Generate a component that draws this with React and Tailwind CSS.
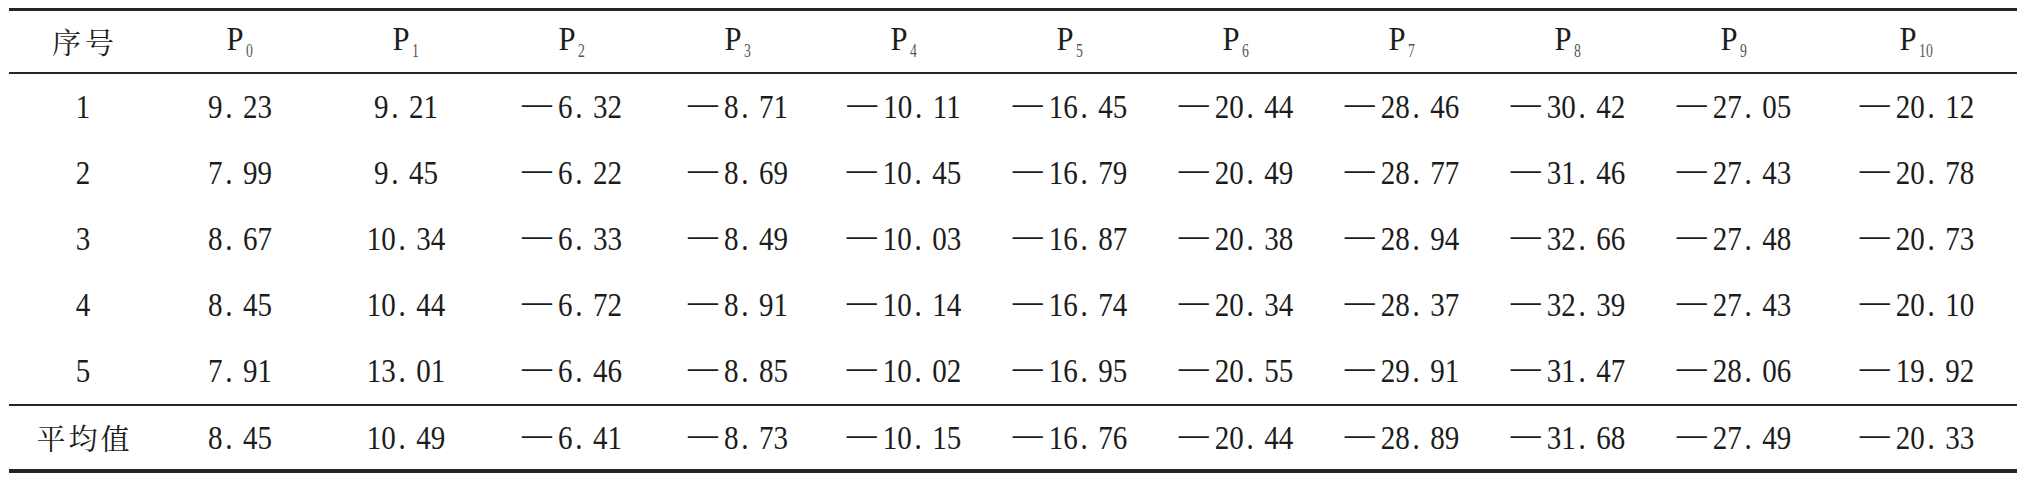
import React from "react";

const headers = ["P0","P1","P2","P3","P4","P5","P6","P7","P8","P9","P10"];

const rows = [
  ["1", "9.23", "9.21", "-6.32", "-8.71", "-10.11", "-16.45", "-20.44", "-28.46", "-30.42", "-27.05", "-20.12"],
  ["2", "7.99", "9.45", "-6.22", "-8.69", "-10.45", "-16.79", "-20.49", "-28.77", "-31.46", "-27.43", "-20.78"],
  ["3", "8.67", "10.34", "-6.33", "-8.49", "-10.03", "-16.87", "-20.38", "-28.94", "-32.66", "-27.48", "-20.73"],
  ["4", "8.45", "10.44", "-6.72", "-8.91", "-10.14", "-16.74", "-20.34", "-28.37", "-32.39", "-27.43", "-20.10"],
  ["5", "7.91", "13.01", "-6.46", "-8.85", "-10.02", "-16.95", "-20.55", "-29.91", "-31.47", "-28.06", "-19.92"],
];

const avg = ["8.45", "10.49", "-6.41", "-8.73", "-10.15", "-16.76", "-20.44", "-28.89", "-31.68", "-27.49", "-20.33"];

const grid = "grid grid-cols-[148px_repeat(10,166px)_200px] items-center text-center";
const serif = "font-['Liberation_Serif']";
const cjk = "font-['Noto_Serif_CJK_SC',serif]";

function Num({ v }) {
  const neg = v.startsWith("-");
  const abs = neg ? v.slice(1) : v;
  const [i, f] = abs.split(".");
  return (
    <div className={`whitespace-nowrap ${serif} text-[33px] leading-[36px] scale-x-[0.88]`}>
      {neg && <span className="relative -top-[4px] text-[34px] mr-[7px]">—</span>}
      {i}
      <span className="pl-[3px] pr-[12px]">.</span>
      {f}
    </div>
  );
}

function Head({ h }) {
  const sub = h.slice(1);
  return (
    <div className={`${serif} text-[34px] leading-[36px] whitespace-nowrap scale-x-[0.9]`}>
      P<span className="relative top-[7px] text-[18px] ml-[2px] text-[#555] inline-block scale-x-[0.85]">{sub}</span>
    </div>
  );
}

export default function App() {
  return (
    <div className="bg-white w-[2032px] h-[480px] pl-[9px] pt-[8px] text-[#1c1c1c]">
      <div className="w-[2008px] border-t-[3px] border-b-[4px] border-[#262626]">
        <div className={`${grid} h-[63px] border-b-[2px] border-[#262626]`}>
          <div className={`${cjk} text-[29px] tracking-[4px] leading-[34px] pl-[4px]`}>序号</div>
          {headers.map((h) => (
            <Head key={h} h={h} />
          ))}
        </div>
        {rows.map((r) => (
          <div key={r[0]} className={`${grid} h-[66px]`}>
            <div className={`${serif} text-[33px] leading-[36px] scale-x-[0.88]`}>{r[0]}</div>
            {r.slice(1).map((v, k) => (
              <Num key={k} v={v} />
            ))}
          </div>
        ))}
        <div className={`${grid} h-[65px] border-t-[2px] border-[#262626]`}>
          <div className={`${cjk} text-[29px] tracking-[3px] leading-[34px] pl-[3px]`}>平均值</div>
          {avg.map((v, k) => (
            <Num key={k} v={v} />
          ))}
        </div>
      </div>
    </div>
  );
}
